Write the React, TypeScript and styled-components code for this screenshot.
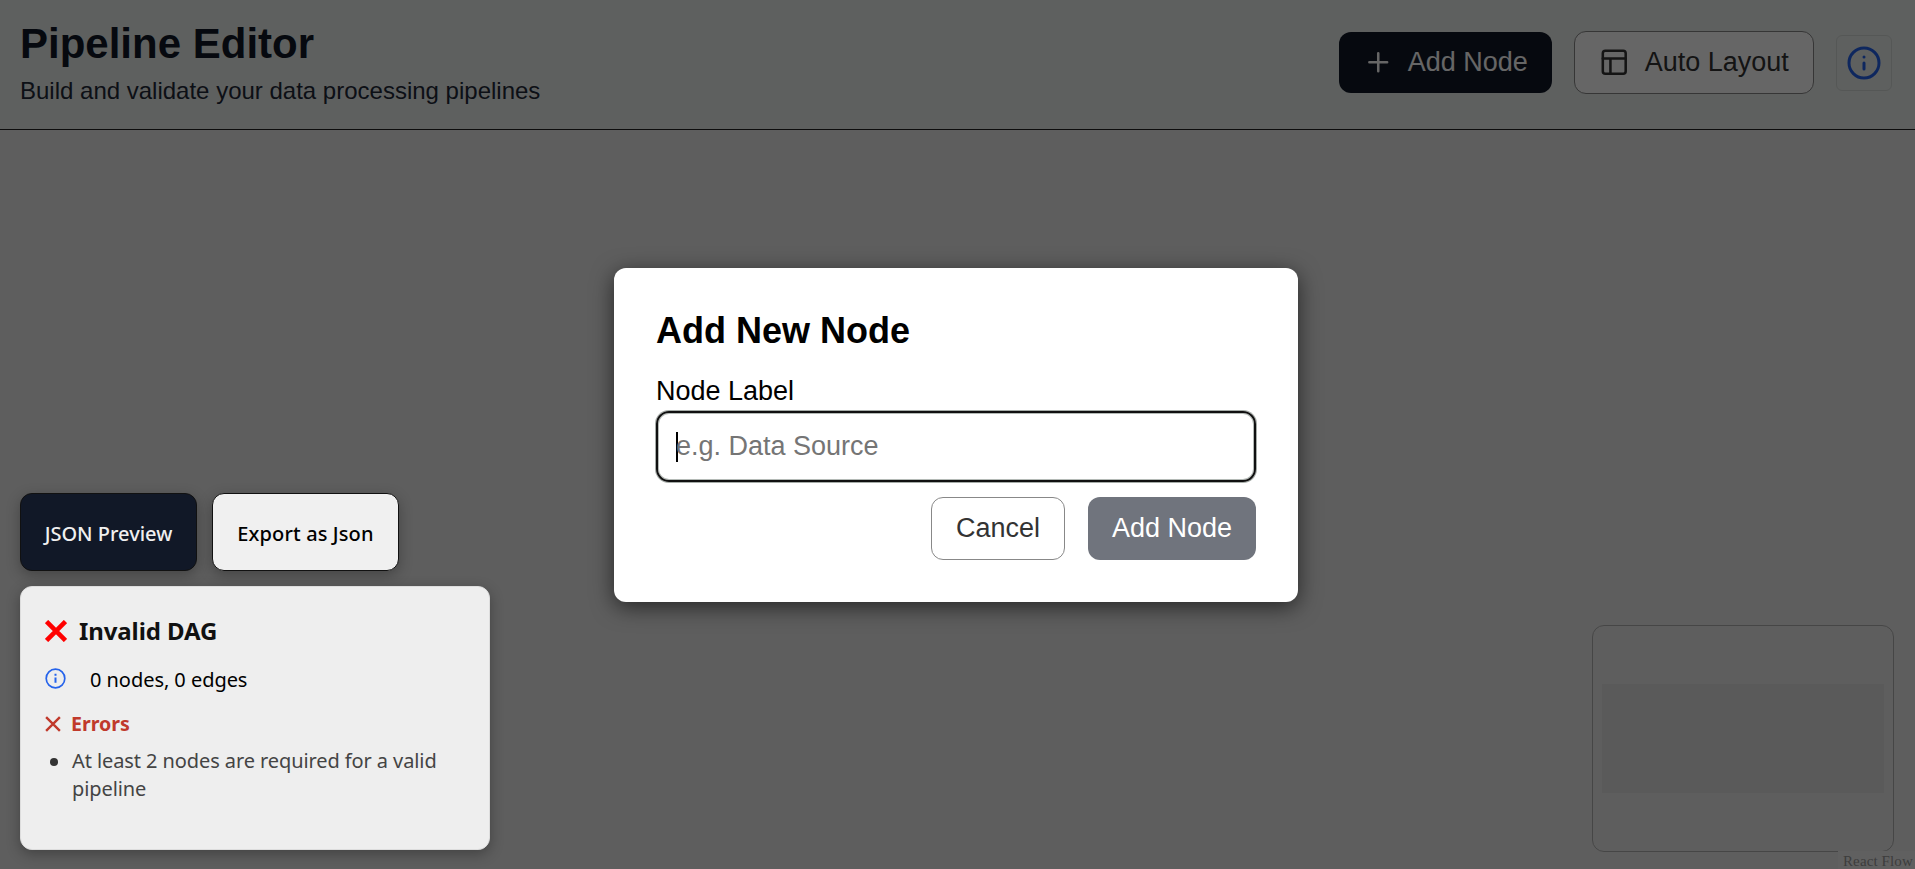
import React from "react";
import styled, { createGlobalStyle, css } from "styled-components";

const sans = '"Liberation Sans", Arial, sans-serif';
const panelSans = '"Noto Sans", "Segoe UI", sans-serif';

const GlobalStyle = createGlobalStyle`
  *, *::before, *::after { box-sizing: border-box; }
  body { margin: 0; overflow: hidden; background: #ebebeb; }
  h1, h2, h3, p, ul { margin: 0; padding: 0; }
  button, input { font-family: inherit; margin: 0; }
`;

const Page = styled.div`
  position: relative;
  display: flex;
  flex-direction: column;
  height: 100vh;
  font-family: ${sans};
`;

const Header = styled.header`
  display: flex;
  justify-content: space-between;
  align-items: flex-start;
  height: 130px;
  padding: 0 23px 0 20px;
  border-bottom: 1px solid #222;
  background: #ebf0ee;
`;

const Heading = styled.div`
  display: flex;
  flex-direction: column;
  padding-top: 20px;
`;

const Title = styled.h1`
  font-size: 42px;
  line-height: 48px;
  font-weight: 700;
  color: #111827;
`;

const Subtitle = styled.p`
  margin-top: 9px;
  font-size: 24px;
  line-height: 28px;
  color: #1f2937;
`;

const Actions = styled.div`
  display: flex;
  align-items: center;
  gap: 22px;
  height: 125px;
`;

const Button = styled.button<{ $variant: "solid" | "outline" | "muted"; $width: number; $height?: number }>`
  display: flex;
  align-items: center;
  justify-content: center;
  gap: 14px;
  width: ${(p) => p.$width}px;
  height: ${(p) => p.$height ?? 63}px;
  padding: 0;
  border-radius: 12px;
  font-size: 27px;
  line-height: 30px;
  ${(p) => p.$variant === "solid" && css`border: 0; background: #111827; color: #fff;`}
  ${(p) => p.$variant === "outline" && css`border: 1px solid #888; background: #fff; color: #333;`}
  ${(p) => p.$variant === "muted" && css`border: 0; background: #70747d; color: #fff;`}

  span { position: relative; top: -1px; }
`;

const LayoutButton = styled(Button)`
  gap: 15px;
`;

const InfoButton = styled.button`
  display: flex;
  align-items: center;
  justify-content: center;
  width: 56px;
  height: 56px;
  padding: 0;
  border: 1px solid #d5dad7;
  border-radius: 6px;
  background: transparent;
  color: #2563eb;
`;

const Canvas = styled.main`
  flex: 1;
  display: flex;
  justify-content: flex-end;
  align-items: flex-end;
  padding: 0 21px 17px 20px;
  background: #ebebeb;
`;

const MiniMap = styled.div`
  display: flex;
  align-items: center;
  width: 302px;
  height: 227px;
  padding: 0 9px;
  border: 1px solid #b0b0b0;
  border-radius: 12px;
`;

const MiniMapView = styled.div`
  flex: 1;
  height: 109px;
  background: #e2e2e2;
`;

const Attribution = styled.div`
  position: absolute;
  right: 0;
  bottom: 0;
  width: 77px;
  height: 18px;
  padding-left: 5px;
  background: #f1f1f1;
  color: #999;
  font: 15px/20px "Liberation Serif", "Times New Roman", serif;
  letter-spacing: 0.12px;
  white-space: nowrap;
`;

const Overlay = styled.div`
  position: absolute;
  inset: 0;
  display: flex;
  align-items: center;
  justify-content: center;
  padding: 1px 3px 0 0;
  background: rgba(0, 0, 0, 0.6);
`;

const Dialog = styled.section`
  width: 684px;
  height: 334px;
  padding: 42px;
  border-radius: 12px;
  background: #fff;
  box-shadow: 0 5px 22px rgba(0, 0, 0, 0.6);
`;

const DialogTitle = styled.h2`
  font-size: 36px;
  line-height: 42px;
  font-weight: 700;
  color: #000;
`;

const Label = styled.label`
  display: block;
  margin-top: 24px;
  font-size: 27px;
  line-height: 31px;
  color: #000;
`;

const Field = styled.div`
  display: flex;
  align-items: center;
  height: 71px;
  margin-top: 4px;
  padding-left: 18px;
  border: 2px solid #101010;
  border-radius: 13px;
  box-shadow: 0 0 0 1px #a6aca8, inset 0 0 0 1px #b4bab6;
`;

const Caret = styled.i`
  width: 2px;
  height: 30px;
  margin-right: -2px;
  background: #000;
`;

const Placeholder = styled.span`
  font-size: 27px;
  line-height: 31px;
  color: #757575;
`;

const DialogActions = styled.div`
  display: flex;
  justify-content: flex-end;
  gap: 23px;
  margin-top: 15px;
`;

const Sidebar = styled.aside`
  position: absolute;
  left: 20px;
  bottom: 19px;
  display: flex;
  flex-direction: column;
  gap: 15px;
  width: 470px;
  font-family: ${panelSans};
`;

const PanelButtons = styled.div`
  display: flex;
  gap: 15px;
`;

const PanelButton = styled.button<{ $dark?: boolean }>`
  height: 78px;
  width: ${(p) => (p.$dark ? 177 : 187)}px;
  padding: 3px 0 0;
  border: 1px solid #111;
  border-radius: 12px;
  background: ${(p) => (p.$dark ? "#111827" : "#f0f0f0")};
  color: ${(p) => (p.$dark ? "#f0f0f0" : "#000")};
  font-size: 20px;
  font-weight: 500;
  line-height: 28px;
  letter-spacing: ${(p) => (p.$dark ? 0 : 0.12)}px;
  white-space: nowrap;
  box-shadow: 0 4px 14px rgba(0, 0, 0, 0.28);
`;

const Card = styled.section`
  height: 264px;
  padding: 27px 24px 0;
  border: 1px solid #ddd;
  border-radius: 12px;
  background: #eee;
  box-shadow: 0 4px 14px rgba(0, 0, 0, 0.3);
`;

const Status = styled.h2`
  display: flex;
  align-items: center;
  gap: 12px;
  font-size: 24px;
  line-height: 34px;
  font-weight: 700;
  letter-spacing: -0.1px;
  color: #111;
`;

const Counts = styled.p`
  display: flex;
  align-items: center;
  gap: 24px;
  margin-top: 18px;
  font-size: 20px;
  line-height: 28px;
  letter-spacing: -0.05px;
  color: #000;

  svg { position: relative; top: -2px; }
`;

const ErrorsTitle = styled.h3`
  display: flex;
  align-items: center;
  gap: 10px;
  margin-top: 16px;
  font-size: 19.6px;
  line-height: 28px;
  font-weight: 700;
  color: #c0392b;
`;

const ErrorList = styled.ul`
  margin-top: 9px;
  list-style: none;
`;

const ErrorItem = styled.li`
  display: flex;
  gap: 14px;
  padding-left: 5px;
  font-size: 20px;
  line-height: 28px;
  letter-spacing: -0.09px;
  color: #444;

  &::before {
    content: "";
    flex: none;
    width: 8px;
    height: 8px;
    margin-top: 11px;
    border-radius: 50%;
    background: #333;
  }
`;

const Icon = ({ size, children }: { size: number; children: React.ReactNode }) => (
  <svg width={size} height={size} viewBox="0 0 24 24" fill="none" stroke="currentColor" strokeWidth={2} strokeLinecap="round" strokeLinejoin="round">
    {children}
  </svg>
);

const Cross = ({ size, weight, color }: { size: number; weight: number; color: string }) => (
  <svg width={size} height={size} viewBox="0 0 20 20" fill="none" stroke={color} strokeWidth={weight}>
    <path d="M1.4 1.4 18.6 18.6M18.6 1.4 1.4 18.6" />
  </svg>
);

export default function App() {
  return (
    <>
      <GlobalStyle />
      <Page>
        <Header>
          <Heading>
            <Title>Pipeline Editor</Title>
            <Subtitle>Build and validate your data processing pipelines</Subtitle>
          </Heading>
          <Actions>
            <Button $variant="solid" $width={213} $height={61}>
              <Icon size={30.5}><path d="M5 12h14M12 5v14" /></Icon>
              <span>Add Node</span>
            </Button>
            <LayoutButton $variant="outline" $width={240}>
              <Icon size={30.5}><rect x="3" y="3" width="18" height="18" rx="2" /><path d="M3 9h18M9 21V9" /></Icon>
              <span>Auto Layout</span>
            </LayoutButton>
            <InfoButton aria-label="Help">
              <Icon size={36}><circle cx="12" cy="12" r="10" /><path d="M12 16v-4M12 8h.01" /></Icon>
            </InfoButton>
          </Actions>
        </Header>
        <Canvas>
          <MiniMap><MiniMapView /></MiniMap>
        </Canvas>
        <Attribution>React Flow</Attribution>
        <Overlay>
          <Dialog role="dialog">
            <DialogTitle>Add New Node</DialogTitle>
            <Label>Node Label</Label>
            <Field><Caret /><Placeholder>e.g. Data Source</Placeholder></Field>
            <DialogActions>
              <Button $variant="outline" $width={134}><span>Cancel</span></Button>
              <Button $variant="muted" $width={168}><span>Add Node</span></Button>
            </DialogActions>
          </Dialog>
        </Overlay>
        <Sidebar>
          <PanelButtons>
            <PanelButton $dark>JSON Preview</PanelButton>
            <PanelButton>Export as Json</PanelButton>
          </PanelButtons>
          <Card>
            <Status><Cross size={22} weight={4.2} color="#ff0000" />Invalid DAG</Status>
            <Counts>
              <svg width="21" height="21" viewBox="0 0 21 21" fill="none" stroke="#2563eb" strokeWidth="1.7">
                <circle cx="10.5" cy="10.5" r="9.3" />
                <path d="M10.5 9.4v5.4M10.5 5.7v2" strokeWidth="2" />
              </svg>
              0 nodes, 0 edges
            </Counts>
            <ErrorsTitle><Cross size={16} weight={3} color="#c0392b" />Errors</ErrorsTitle>
            <ErrorList>
              <ErrorItem>At least 2 nodes are required for a valid pipeline</ErrorItem>
            </ErrorList>
          </Card>
        </Sidebar>
      </Page>
    </>
  );
}
